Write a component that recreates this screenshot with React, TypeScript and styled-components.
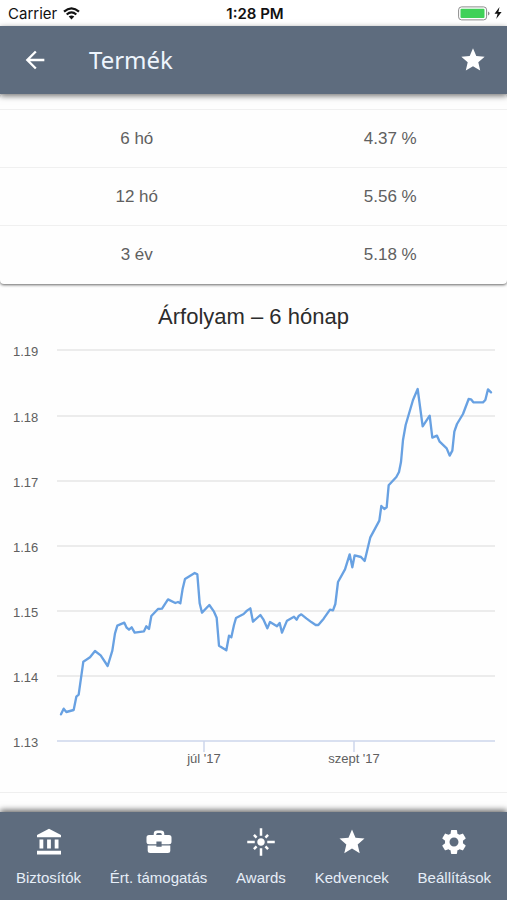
import React from "react";
import styled, { createGlobalStyle } from "styled-components";
import { MdArrowBack, MdFlare, MdSettings, MdStar } from "react-icons/md";

const GlobalStyle = createGlobalStyle`
  * { box-sizing: border-box; }
  body {
    margin: 0;
    background: #fefefe;
    font-family: "Liberation Sans", Arial, sans-serif;
  }
`;

const slate = "#5e6c7e";

const Screen = styled.div`
  display: flex;
  flex-direction: column;
  height: 100vh;
  overflow: hidden;
`;

const StatusBar = styled.div`
  display: grid;
  grid-template-columns: 1fr auto 1fr;
  align-items: center;
  flex: none;
  height: 26px;
  padding: 0 5px 0 8px;
  background: #fff;
  color: #111;
  font-family: Inter, sans-serif;
  font-size: 15px;
`;

const Carrier = styled.div`
  display: flex;
  align-items: center;
  gap: 6px;
`;

const Clock = styled.time`
  font-weight: 600;
`;

const Power = styled.div`
  display: flex;
  align-items: center;
  justify-content: flex-end;
  gap: 4px;
`;

const Header = styled.header`
  position: relative;
  z-index: 1;
  display: flex;
  align-items: center;
  flex: none;
  height: 68px;
  padding: 0 20px 0 21px;
  background: ${slate};
  color: #fff;
  box-shadow: 0 2px 6px rgba(0, 0, 0, 0.55);
`;

const IconButton = styled.button`
  display: flex;
  padding: 0;
  border: 0;
  background: none;
  color: inherit;
  font-size: 28px;
`;

const PageTitle = styled.h1`
  flex: 1;
  margin: 0 0 0 40px;
  color: #eef5fd;
  font-family: "Noto Sans", sans-serif;
  font-size: 24px;
  font-weight: 400;
  line-height: 32px;
`;

const Content = styled.main`
  flex: 1;
  min-height: 0;
  overflow: hidden;
`;

const YieldCard = styled.section`
  padding-top: 15px;
  border-radius: 4px;
  background: #fefefe;
  box-shadow: 0 1px 3px rgba(0, 0, 0, 0.6);
`;

const YieldTable = styled.table`
  width: 100%;
  border-collapse: collapse;
  table-layout: fixed;
  color: #606060;
  font-size: 17px;

  th,
  td {
    width: 50%;
    height: 58px;
    padding: 1px 0 0 20px;
    border-top: 1px solid #f0f0f0;
    font-weight: 400;
    text-align: center;
  }
`;

const ChartCard = styled.section`
  padding-top: 19px;
`;

const ChartTitle = styled.h2`
  margin: 0;
  color: #2c2c2c;
  font-size: 22px;
  font-weight: 400;
  line-height: 28px;
  text-align: center;
`;

const Chart = styled.svg`
  display: block;
  width: 100%;
  height: auto;
  margin-top: 9px;
  fill: #606060;
  font-size: 13px;
`;

const NextCard = styled.section`
  height: 60px;
  margin-top: 2px;
  border-top: 1px solid #efefef;
`;

const TabBar = styled.nav`
  position: relative;
  z-index: 1;
  display: flex;
  justify-content: space-between;
  flex: none;
  height: 88px;
  padding: 15px 16px 0;
  background: ${slate};
  box-shadow: 0 -2px 6px rgba(0, 0, 0, 0.6);
`;

const Tab = styled.a`
  display: flex;
  flex-direction: column;
  align-items: center;
  gap: 11px;
  color: #fff;
  font-size: 15px;
  line-height: 20px;
  text-decoration: none;

  svg {
    width: 30px;
    height: 30px;
  }

  span {
    color: #e6eef8;
  }
`;

const WifiIcon = () => (
  <svg width="17" height="13" viewBox="0 0 17 13" fill="none" stroke="#111" strokeWidth="2.2" aria-hidden="true">
    <path d="M1 4.6Q8.500-1.900 16 4.600" />
    <path d="M3.700 7.500Q8.500 3.200 13.300 7.500" />
    <path d="M8.500 12.400L5.700 9.600Q8.500 7.200 11.300 9.600Z" fill="#111" stroke="none" />
  </svg>
);

const BatteryIcon = () => (
  <svg width="32" height="15" viewBox="0 0 32 15" aria-hidden="true">
    <rect x="0.600" y="0.900" width="28" height="13" rx="3" fill="#fff" stroke="#8d8d8d" />
    <rect x="2.500" y="2.800" width="24" height="9.200" rx="1" fill="#3fd158" />
    <path d="M30 5.500q1.500 0.500 1.500 2t-1.500 2z" fill="#8d8d8d" />
  </svg>
);

const BoltIcon = () => (
  <svg width="8" height="12" viewBox="0 0 8 12" aria-hidden="true">
    <path d="M5.500 0L0.500 6.800H3.600L2.200 12L7.600 4.900H4.400Z" fill="#111" />
  </svg>
);

const BankIcon = () => (
  <svg viewBox="0 0 30 30" fill="currentColor" aria-hidden="true">
    <path d="M15 1.800L27 8V10.200H3V8ZM5.500 12.500H9.300V21.500H5.500ZM13.100 12.500H16.900V21.500H13.100ZM20.700 12.500H24.500V21.500H20.700ZM3 23.800H27V27.600H3Z" />
  </svg>
);

const BriefcaseIcon = () => (
  <svg viewBox="0 0 30 30" fill="currentColor" aria-hidden="true">
    <path
      fillRule="evenodd"
      d="M9.700 8V7Q9.700 3.600 13.200 3.600H16.800Q20.300 3.600 20.300 7V8H25Q27.500 8 27.500 10.500V14.800Q27.500 17.300 25 17.300H17.600V14.600H12.400V17.300H5Q2.500 17.300 2.500 14.800V10.500Q2.500 8 5 8ZM12.200 8H17.800V7.500Q17.800 6 16.300 6H13.700Q12.200 6 12.200 7.500Z"
    />
    <path d="M3.700 18.600H12.400V19.800H17.600V18.600H26.300V23.600Q26.300 26.100 23.800 26.100H6.200Q3.700 26.100 3.700 23.600Z" />
  </svg>
);

const yields = [
  { term: "6 hó", value: "4.37 %" },
  { term: "12 hó", value: "5.56 %" },
  { term: "3 év", value: "5.18 %" },
];

const priceTicks = [
  { label: "1.19", y: 10 },
  { label: "1.18", y: 76 },
  { label: "1.17", y: 141 },
  { label: "1.16", y: 206 },
  { label: "1.15", y: 271 },
  { label: "1.14", y: 336 },
  { label: "1.13", y: 401 },
];

const monthTicks = [
  { label: "júl '17", x: 204 },
  { label: "szept '17", x: 354 },
];

const priceLine = `
  183,1123 191,1106 199,1116 221,1110 229,1070 236,1064 250,965 270,952 285,933 302,946
  323,978 337,932 345,880 352,857 373,848 380,863 387,869 395,862 404,878 432,874
  439,859 447,867 454,828 474,807 486,806 504,778 526,789 534,786 541,790 548,746
  555,717 584,699 592,703 599,790 606,818 628,795 642,815 650,833 657,917 679,931
  687,887 694,892 702,855 708,834 731,822 741,812 751,805 759,845 781,825 790,838
  802,865 810,846 831,859 839,849 846,878 861,842 882,830 890,839 896,828 904,823
  919,835 935,847 947,855 955,855 971,836 990,809 999,811 1006,792 1014,726 1035,688
  1049,643 1057,682 1064,646 1083,651 1094,663 1111,592 1138,542 1144,498 1153,507
  1160,502 1166,436 1189,411 1197,396 1203,366 1209,300 1217,255 1239,180 1253,147
  1268,259 1289,227 1297,293 1311,287 1319,305 1340,325 1349,347 1357,332 1363,275
  1371,252 1389,222 1406,177 1413,178 1420,187 1449,187 1456,180 1464,148 1473,157
`;

const tabs = [
  { label: "Biztosítók", href: "#biztositok", icon: <BankIcon /> },
  { label: "Ért. támogatás", href: "#tamogatas", icon: <BriefcaseIcon /> },
  { label: "Awards", href: "#awards", icon: <MdFlare /> },
  { label: "Kedvencek", href: "#kedvencek", icon: <MdStar /> },
  { label: "Beállítások", href: "#beallitasok", icon: <MdSettings /> },
];

const PriceChart = () => (
  <Chart viewBox="0 0 507 450" role="img" aria-label="Árfolyam – 6 hónap">
    {priceTicks.map(({ label, y }) => (
      <g key={label}>
        <path d={`M57 ${y}H495`} stroke={label === "1.13" ? "#ccd6eb" : "#e6e6e6"} strokeWidth="1.500" />
        <text x="13" y={y + 6}>{label}</text>
      </g>
    ))}
    {monthTicks.map(({ label, x }) => (
      <g key={label}>
        <path d={`M${x} 401V412`} stroke="#ccd6eb" strokeWidth="1.500" />
        <text x={x} y="423" textAnchor="middle">{label}</text>
      </g>
    ))}
    <svg width="507" height="450" viewBox="0 0 1521 1350">
      <polyline points={priceLine} fill="none" stroke="#68a1e2" strokeWidth="7" strokeLinejoin="round" strokeLinecap="round" />
    </svg>
  </Chart>
);

export default function App() {
  return (
    <Screen>
      <GlobalStyle />
      <StatusBar>
        <Carrier>Carrier <WifiIcon /></Carrier>
        <Clock>1:28 PM</Clock>
        <Power><BatteryIcon /><BoltIcon /></Power>
      </StatusBar>
      <Header>
        <IconButton aria-label="Vissza"><MdArrowBack /></IconButton>
        <PageTitle>Termék</PageTitle>
        <IconButton aria-label="Kedvenc"><MdStar /></IconButton>
      </Header>
      <Content>
        <YieldCard>
          <YieldTable>
            <tbody>
              {yields.map(({ term, value }) => (
                <tr key={term}>
                  <th scope="row">{term}</th>
                  <td>{value}</td>
                </tr>
              ))}
            </tbody>
          </YieldTable>
        </YieldCard>
        <ChartCard>
          <ChartTitle>Árfolyam – 6 hónap</ChartTitle>
          <PriceChart />
        </ChartCard>
        <NextCard />
      </Content>
      <TabBar>
        {tabs.map(({ label, href, icon }) => (
          <Tab key={label} href={href}>
            {icon}
            <span>{label}</span>
          </Tab>
        ))}
      </TabBar>
    </Screen>
  );
}
